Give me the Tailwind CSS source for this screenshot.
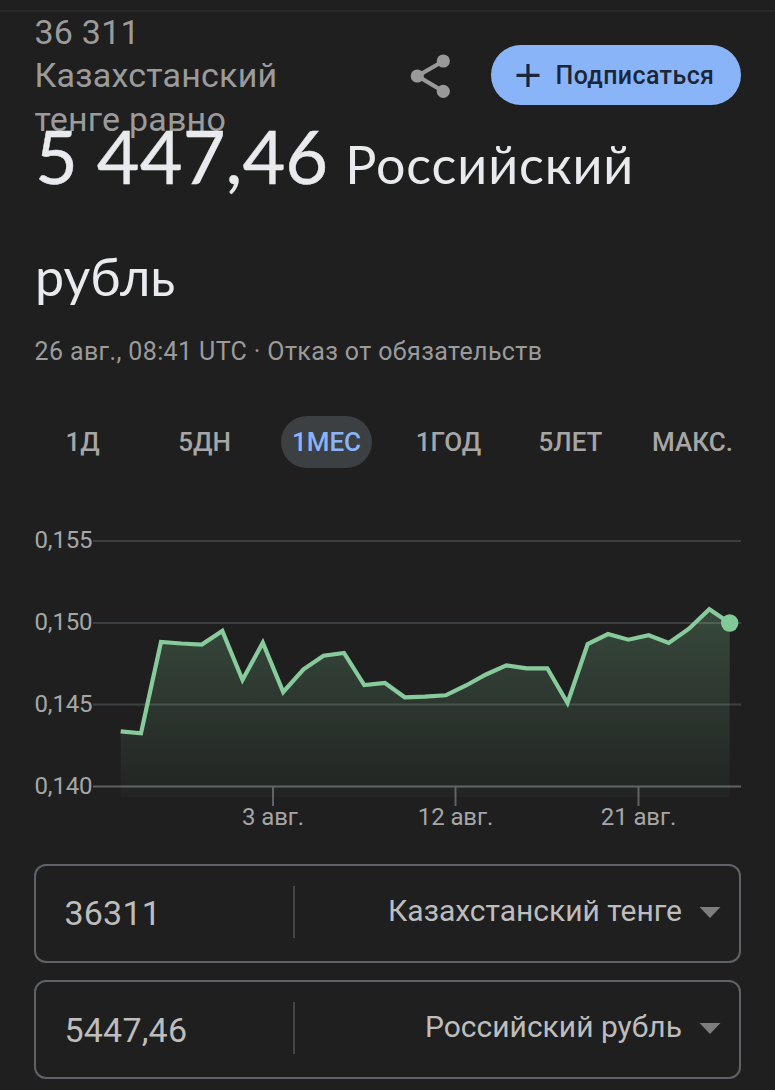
<!DOCTYPE html>
<html lang="ru">

<head>
    <meta charset="UTF-8">
    <meta name="viewport" content="width=device-width, initial-scale=1.0">
    <title>Конвертер валют</title>
    <script src="https://cdn.jsdelivr.net/npm/@tailwindcss/browser@4"></script>
</head>

<body class="bg-[#1f1f1f]">
    <div class="w-[775px] h-[1090px] overflow-hidden bg-[#1f1f1f] font-[Roboto,sans-serif] text-[#9b9b9b] flex flex-col">
        <div class="h-[11px] shrink-0 pt-2.5">
            <div class="h-0.5 bg-[#28292d]"></div>
        </div>

        <header class="h-[89px] shrink-0 pl-[34.5px] pr-[34.5px] flex items-start">
            <p class="w-[270px] text-[34px] leading-[43.3px] tracking-[0.22px]">36 311 Казахстанский тенге равно</p>
            <svg class="ml-[104px] mt-[42px] w-[42px] h-[46px] shrink-0" viewBox="0 0 42 46" fill="#999999">
                <path d="M34.5 8 L8.5 23 L34.5 38.5" fill="none" stroke="#999999" stroke-width="4.2" />
                <circle cx="34.3" cy="8" r="6.6" />
                <circle cx="8.3" cy="23" r="6.6" />
                <circle cx="34.3" cy="38.3" r="6.6" />
            </svg>
            <button class="ml-auto mt-[34px] w-[250px] h-[60px] shrink-0 rounded-full bg-[#8ab4f8] text-[#1b2738] flex items-center pl-[25px]">
                <svg class="w-6 h-6 mr-4" viewBox="0 0 24 24" stroke="currentColor" stroke-width="3.2">
                    <path d="M0.5 12.4H23.5M12 1V24" />
                </svg>
                <span class="pt-px text-[25px] font-medium whitespace-nowrap tracking-[0.4px]">Подписаться</span>
            </button>
        </header>

        <h1 class="relative h-[226px] shrink-0 pl-[35px] text-[#e8eaed] font-[Lato,Inter,sans-serif]">
            <span class="block whitespace-nowrap text-[74px] leading-[112px] [-webkit-text-stroke:0.4px_#e8eaed]">5 447,46 <span class="-ml-0.5 text-[52px] leading-none tracking-[0.9px] [-webkit-text-stroke:0px]">Российский</span></span>
            <span class="block pt-2 text-[52px] leading-[112px]">рубль</span>
        </h1>

        <p class="h-[90px] shrink-0 pl-[34.5px] pt-[11px] text-[25px] leading-[30px] tracking-[0.38px]">26 авг., 08:41 UTC · Отказ от обязательств</p>

        <nav class="h-[52px] shrink-0 pl-[37px] flex text-[26px] leading-[52px] font-medium text-center text-[#a6a6a6]">
            <span class="w-[91px]">1Д</span>
            <span class="w-[91px] ml-[31px]">5ДН</span>
            <span class="w-[91px] ml-[31px] rounded-full bg-[#3c4043] text-[#8ab4f8]">1МЕС</span>
            <span class="w-[91px] ml-[31px]">1ГОД</span>
            <span class="w-[91px] ml-[31px]">5ЛЕТ</span>
            <span class="w-[91px] ml-[31px]">МАКС.</span>
        </nav>

        <!-- rate chart, one month -->
        <svg class="w-[775px] h-[396px] shrink-0" viewBox="0 468 775 396">
            <defs>
                <linearGradient id="area" gradientUnits="userSpaceOnUse" x1="0" y1="609" x2="0" y2="797">
                    <stop offset="0" stop-color="#81c995" stop-opacity="0.25" />
                    <stop offset="1" stop-color="#81c995" stop-opacity="0.03" />
                </linearGradient>
            </defs>
            <g stroke="#3c4043" stroke-width="2">
                <path d="M93 541H741M93 623H741M93 704.5H741" />
            </g>
            <path d="M93 786.5H741M273 787V806M455.5 787V806M638.5 787V806" stroke="#5f6163" stroke-width="2" />
            <path d="M120.7 731.3L141 733.3L161 642L181.5 643.5L201.8 644.5L222.3 631L242.5 680L262.8 642.7L283.2 692L303.5 669.3L323.5 655.7L344 653L364.3 685L385 683L404.7 697.3L425 696.6L445.7 695.3L466 685.5L486 674.5L506.3 665.3L526.7 668.3L547.3 668.3L567.5 703L587.7 644L608 634L628.3 639.7L648.7 635.3L668.7 643L689 628.7L709.3 609.3L729.7 623V797H120.7Z" fill="url(#area)" />
            <path d="M120.7 731.3L141 733.3L161 642L181.5 643.5L201.8 644.5L222.3 631L242.5 680L262.8 642.7L283.2 692L303.5 669.3L323.5 655.7L344 653L364.3 685L385 683L404.7 697.3L425 696.6L445.7 695.3L466 685.5L486 674.5L506.3 665.3L526.7 668.3L547.3 668.3L567.5 703L587.7 644L608 634L628.3 639.7L648.7 635.3L668.7 643L689 628.7L709.3 609.3L729.7 623" fill="none" stroke="#87ca9b" stroke-width="4.2" />
            <circle cx="729.7" cy="623" r="8.7" fill="#81c995" />
            <g fill="#a6a6a6" class="text-[24px] tracking-[-0.15px]">
                <text x="34.5" y="548">0,155</text>
                <text x="34.5" y="630">0,150</text>
                <text x="34.5" y="711.5">0,145</text>
                <text x="34.5" y="793.5">0,140</text>
            </g>
            <g fill="#a6a6a6" text-anchor="middle" class="text-[24px] tracking-[-0.1px]">
                <text x="273" y="825">3 авг.</text>
                <text x="455.5" y="825">12 авг.</text>
                <text x="638.5" y="825">21 авг.</text>
            </g>
        </svg>

        <section class="shrink-0 pl-[34px] pr-[34px] flex flex-col gap-[17px] text-[#bdbdbd]">
            <div class="h-[99px] rounded-[12px] border-2 border-[#5f6368] flex items-center">
                <span class="w-[257px] pl-[28.5px] text-[34px] tracking-[0.2px]">36311</span>
                <span class="w-0.5 h-[52px] -mt-1 bg-[#444444]"></span>
                <span class="ml-auto pb-[7px] text-[30px]">Казахстанский тенге</span>
                <svg class="ml-[17px] mr-[18px] -mt-1 w-[22px] h-[12px]" viewBox="0 0 22 12">
                    <path d="M0.5 1H21.5L11 12Z" fill="#7d7d7d" />
                </svg>
            </div>
            <div class="h-[99px] rounded-[12px] border-2 border-[#5f6368] flex items-center">
                <span class="w-[257px] pl-[28.5px] pt-px text-[34px] tracking-[0.2px]">5447,46</span>
                <span class="w-0.5 h-[52px] -mt-1 bg-[#444444]"></span>
                <span class="ml-auto pb-[7px] text-[30px]">Российский рубль</span>
                <svg class="ml-[17px] mr-[18px] -mt-1 w-[22px] h-[12px]" viewBox="0 0 22 12">
                    <path d="M0.5 1H21.5L11 12Z" fill="#7d7d7d" />
                </svg>
            </div>
        </section>
    </div>
</body>

</html>
